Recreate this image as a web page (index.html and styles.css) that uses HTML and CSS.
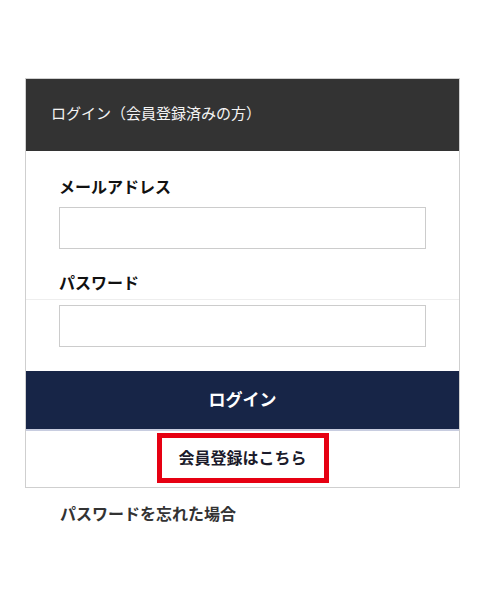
FILE: index.html
```html
<!DOCTYPE html>
<html lang="ja">
<head>
<meta charset="utf-8">
<title>ログイン</title>
<link rel="stylesheet" href="styles.css">
</head>
<body>
<div class="card">
  <div class="card-head">ログイン（会員登録済みの方）</div>
  <div class="card-body">
    <label class="field-label first">メールアドレス</label>
    <div class="input"></div>
    <label class="field-label second">パスワード</label>
    <div class="sep"></div>
    <div class="input"></div>
  </div>
  <div class="login-btn">ログイン</div>
  <div class="card-foot">
    <div class="register">会員登録はこちら</div>
  </div>
</div>
<div class="forgot">パスワードを忘れた場合</div>
</body>
</html>
```
FILE: styles.css
```css
html, body {
  margin: 0;
  padding: 0;
  background: #fff;
  font-family: "Noto Sans CJK JP", "Noto Sans", sans-serif;
}
.card {
  margin: 78px 0 0 25px;
  width: 433px;
  border: 1px solid #cfcfcf;
}
.card-head {
  height: 72px;
  box-sizing: border-box;
  padding: 0 0 4px 25px;
  display: flex;
  align-items: center;
  background: #333333;
  color: #f4f4f4;
  font-size: 15px;
  line-height: 20px;
}
.card-body {
  padding: 0 33px 24px;
}
.field-label {
  display: block;
  font-size: 16px;
  line-height: 24px;
  font-weight: 700;
  color: #111;
}
.field-label.first {
  margin: 23px 0 9px;
}
.field-label.second {
  margin: 21px 0 5px;
}
.sep {
  margin: 0 -33px 5px;
  border-top: 1px solid #eeeeee;
}
.input {
  height: 40px;
  border: 1px solid #cccccc;
  background: #fff;
}
.login-btn {
  height: 60px;
  box-sizing: border-box;
  padding-bottom: 4px;
  display: flex;
  align-items: center;
  justify-content: center;
  background: #172547;
  color: #fff;
  font-size: 17px;
  font-weight: 700;
  border-bottom: 2px solid #c8cde0;
}
.card-foot {
  display: flex;
  justify-content: center;
  padding: 2px 0 4px;
}
.register {
  width: 172px;
  height: 50px;
  box-sizing: border-box;
  padding-bottom: 3px;
  border: 5px solid #e60012;
  display: flex;
  align-items: center;
  justify-content: center;
  font-size: 16px;
  font-weight: 700;
  color: #1b1b2b;
}
.forgot {
  margin: 13px 0 0 60px;
  font-size: 16px;
  line-height: 24px;
  font-weight: 700;
  color: #333;
}
```
